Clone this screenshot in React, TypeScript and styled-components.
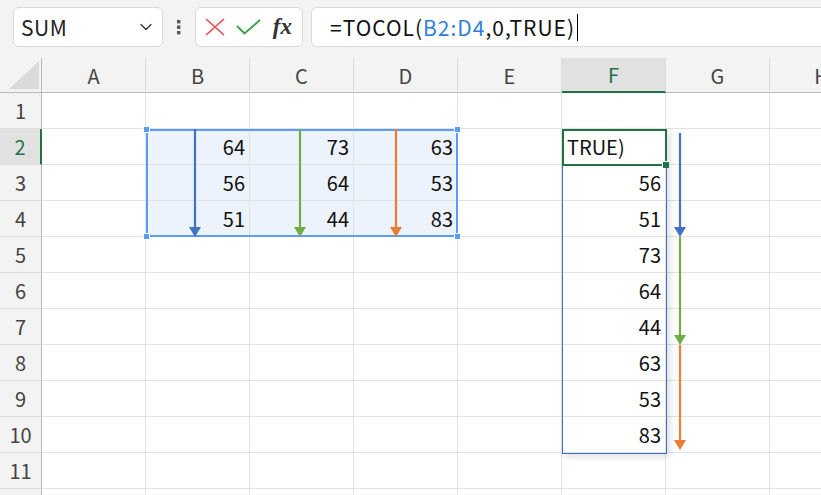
import React from "react";
import styled, { createGlobalStyle } from "styled-components";
import { ChevronDown } from "lucide-react";

const GlobalStyle = createGlobalStyle`
  html, body { margin: 0; padding: 0; background: #fff; overflow: hidden; }
  body { font-family: "Noto Sans CJK JP", "Noto Sans", sans-serif; }
`;

const ROW_HEAD_W = 42;
const COL_W = 104;
const HEAD_H = 35;
const ROW_H = 36;
const columns = ["A", "B", "C", "D", "E", "F", "G", "H"];
const rowCount = 12;

const values: Record<string, string> = {
    B2: "64", C2: "73", D2: "63",
    B3: "56", C3: "64", D3: "53",
    B4: "51", C4: "44", D4: "83",
    F2: "TRUE)",
    F3: "56", F4: "51", F5: "73", F6: "64", F7: "44", F8: "63", F9: "53", F10: "83",
};

const Page = styled.div`
    width: 821px;
    height: 495px;
    overflow: hidden;
    background: #fff;
`;

const Toolbar = styled.div`
    height: 58px;
    box-sizing: border-box;
    background: #f3f3f3;
    display: flex;
    align-items: flex-start;
    padding: 7px 0 0 13px;
    overflow: hidden;
`;

const Box = styled.div`
    flex-shrink: 0;
    height: 40px;
    box-sizing: border-box;
    background: #fff;
    border: 1px solid #d9d9d9;
    border-radius: 6px;
    display: flex;
    align-items: center;
`;

const NameBox = styled(Box)`
    width: 150px;
    justify-content: space-between;
    padding: 0 6px 0 7px;
    font-size: 21px;
    letter-spacing: 0.6px;
    color: #222;
`;

const Dots = styled.div`
    flex-shrink: 0;
    width: 32px;
    height: 40px;
    display: flex;
    align-items: center;
    justify-content: center;
`;

const FxBox = styled(Box)`
    width: 108px;
    padding: 0 8px 0 9px;
    justify-content: space-between;
`;

const Fx = styled.span`
    font-family: "Liberation Serif", "DejaVu Serif", serif;
    font-style: italic;
    font-weight: bold;
    font-size: 23px;
    color: #333;
    padding-right: 2px;
`;

const FormulaBox = styled(Box)`
    width: 540px;
    margin-left: 8px;
    padding-left: 18px;
    font-size: 21px;
    letter-spacing: 1px;
    color: #111;
    white-space: pre;
`;

const Ref = styled.span`
    color: #2f7fd8;
`;

const Caret = styled.span`
    display: inline-block;
    width: 1px;
    height: 27px;
    background: #000;
    margin-left: 2px;
`;

const Sheet = styled.div`
    position: relative;
    display: grid;
    grid-template-columns: ${ROW_HEAD_W}px repeat(${columns.length}, ${COL_W}px);
    grid-template-rows: ${HEAD_H}px repeat(${rowCount}, ${ROW_H}px);
`;

const Corner = styled.div`
    box-sizing: border-box;
    background: #f3f3f3;
    border-right: 1px solid #b9b9b9;
    border-bottom: 1px solid #b9b9b9;
    display: flex;
    align-items: flex-end;
    justify-content: flex-end;
    padding: 0 2px 3px 0;
`;

const ColHead = styled.div<{ $selected?: boolean }>`
    box-sizing: border-box;
    background: ${(p) => (p.$selected ? "#e1e1e1" : "#f3f3f3")};
    border-right: 1px solid #dcdcdc;
    border-bottom: ${(p) => (p.$selected ? "2px solid #217346" : "1px solid #b9b9b9")};
    color: ${(p) => (p.$selected ? "#217346" : "#444")};
    font-size: 20px;
    display: flex;
    align-items: center;
    justify-content: center;
    white-space: nowrap;
`;

const RowHead = styled.div<{ $selected?: boolean }>`
    box-sizing: border-box;
    background: ${(p) => (p.$selected ? "#e1e1e1" : "#f3f3f3")};
    border-right: ${(p) => (p.$selected ? "2px solid #217346" : "1px solid #b9b9b9")};
    border-bottom: 1px solid #dcdcdc;
    color: ${(p) => (p.$selected ? "#217346" : "#444")};
    font-size: 20px;
    display: flex;
    align-items: center;
    justify-content: center;
`;

const Cell = styled.div<{ $tint?: boolean; $left?: boolean }>`
    box-sizing: border-box;
    background: ${(p) => (p.$tint ? "#ecf3fd" : "#fff")};
    border-right: 1px solid #e1e1e1;
    border-bottom: 1px solid #e1e1e1;
    font-size: 20px;
    color: #111;
    display: flex;
    align-items: center;
    justify-content: ${(p) => (p.$left ? "flex-start" : "flex-end")};
    padding: 0 4px 0 5px;
    white-space: nowrap;
    overflow: hidden;
`;

const Selection = styled.div`
    position: absolute;
    box-sizing: border-box;
    left: ${ROW_HEAD_W + COL_W}px;
    top: ${HEAD_H + ROW_H}px;
    width: ${COL_W * 3}px;
    height: ${ROW_H * 3}px;
    border: 2px solid #5b9cf6;
`;

const Handle = styled.div<{ $x: "left" | "right"; $y: "top" | "bottom" }>`
    position: absolute;
    width: 7px;
    height: 7px;
    box-sizing: border-box;
    background: #5b9cf6;
    border: 1px solid #fff;
    ${(p) => p.$x}: -5px;
    ${(p) => p.$y}: -5px;
`;

const Spill = styled.div`
    position: absolute;
    box-sizing: border-box;
    left: ${ROW_HEAD_W + COL_W * 5}px;
    top: ${HEAD_H + ROW_H}px;
    width: ${COL_W + 1}px;
    height: ${ROW_H * 9 + 1}px;
    border: 1px solid #3d6fcf;
    box-shadow: 3px 3px 7px rgba(0, 0, 0, 0.13);
`;

const Active = styled.div`
    position: absolute;
    box-sizing: border-box;
    left: ${ROW_HEAD_W + COL_W * 5}px;
    top: ${HEAD_H + ROW_H}px;
    width: ${COL_W + 1}px;
    height: ${ROW_H + 1}px;
    border: 2px solid #217346;
`;

const FillHandle = styled.div`
    position: absolute;
    right: -4px;
    bottom: -4px;
    width: 6px;
    height: 6px;
    background: #217346;
    border-left: 1px solid #fff;
    border-top: 1px solid #fff;
`;

const ArrowWrap = styled.svg`
    position: absolute;
    overflow: visible;
`;

function Arrow({ x, y1, y2, color }: { x: number; y1: number; y2: number; color: string }) {
    const h = y2 - y1;
    return (
        <ArrowWrap style={{ left: x - 7, top: y1 }} width={14} height={h}>
            <line x1={7} y1={0} x2={7} y2={h - 9} stroke={color} strokeWidth={2.2} />
            <polygon points={`1,${h - 10} 13,${h - 10} 7,${h}`} fill={color} />
        </ArrowWrap>
    );
}

const BLUE = "#4472c4";
const GREEN = "#70ad47";
const ORANGE = "#ed7d31";
const top = 58;

export default function App() {
    const rows = Array.from({ length: rowCount }, (_, i) => i + 1);
    return (
        <Page>
            <GlobalStyle />
            <Toolbar>
                <NameBox>
                    <span>SUM</span>
                    <ChevronDown size={20} strokeWidth={1.5} color="#333" />
                </NameBox>
                <Dots>
                    <svg width={6} height={16}>
                        <rect x={1} y={1} width={3.4} height={3.4} fill="#555" />
                        <rect x={1} y={6.5} width={3.4} height={3.4} fill="#555" />
                        <rect x={1} y={12} width={3.4} height={3.4} fill="#555" />
                    </svg>
                </Dots>
                <FxBox>
                    <svg width={20} height={18}>
                        <path d="M1 1 L19 17 M19 1 L1 17" stroke="#e8484c" strokeWidth={1.6} fill="none" />
                    </svg>
                    <svg width={25} height={16}>
                        <path d="M1 7 L8.5 14.5 L24 1" stroke="#3ba24a" strokeWidth={1.9} fill="none" />
                    </svg>
                    <Fx>fx</Fx>
                </FxBox>
                <FormulaBox>
                    =TOCOL(<Ref>B2:D4</Ref>,0,TRUE)
                    <Caret />
                </FormulaBox>
            </Toolbar>
            <Sheet>
                <Corner>
                    <svg width={30} height={28}>
                        <polygon points="30,0 30,28 0,28" fill="#dadada" />
                    </svg>
                </Corner>
                {columns.map((c) => (
                    <ColHead key={c} $selected={c === "F"}>
                        {c}
                    </ColHead>
                ))}
                {rows.map((r) => (
                    <React.Fragment key={r}>
                        <RowHead $selected={r === 2}>{r < rowCount ? r : ""}</RowHead>
                        {columns.map((c) => {
                            const id = c + r;
                            const tint = "BCD".includes(c) && r >= 2 && r <= 4;
                            return (
                                <Cell key={id} $tint={tint} $left={id === "F2"}>
                                    {values[id]}
                                </Cell>
                            );
                        })}
                    </React.Fragment>
                ))}
                <Selection>
                    <Handle $x="left" $y="top" />
                    <Handle $x="right" $y="top" />
                    <Handle $x="left" $y="bottom" />
                    <Handle $x="right" $y="bottom" />
                </Selection>
                <Spill />
                <Active>
                    <FillHandle />
                </Active>
                <Arrow x={195} y1={129 - top} y2={237 - top} color={BLUE} />
                <Arrow x={300} y1={129 - top} y2={237 - top} color={GREEN} />
                <Arrow x={396} y1={129 - top} y2={237 - top} color={ORANGE} />
                <Arrow x={680} y1={133 - top} y2={237 - top} color={BLUE} />
                <Arrow x={680} y1={237 - top} y2={345 - top} color={GREEN} />
                <Arrow x={680} y1={345 - top} y2={450 - top} color={ORANGE} />
            </Sheet>
        </Page>
    );
}
